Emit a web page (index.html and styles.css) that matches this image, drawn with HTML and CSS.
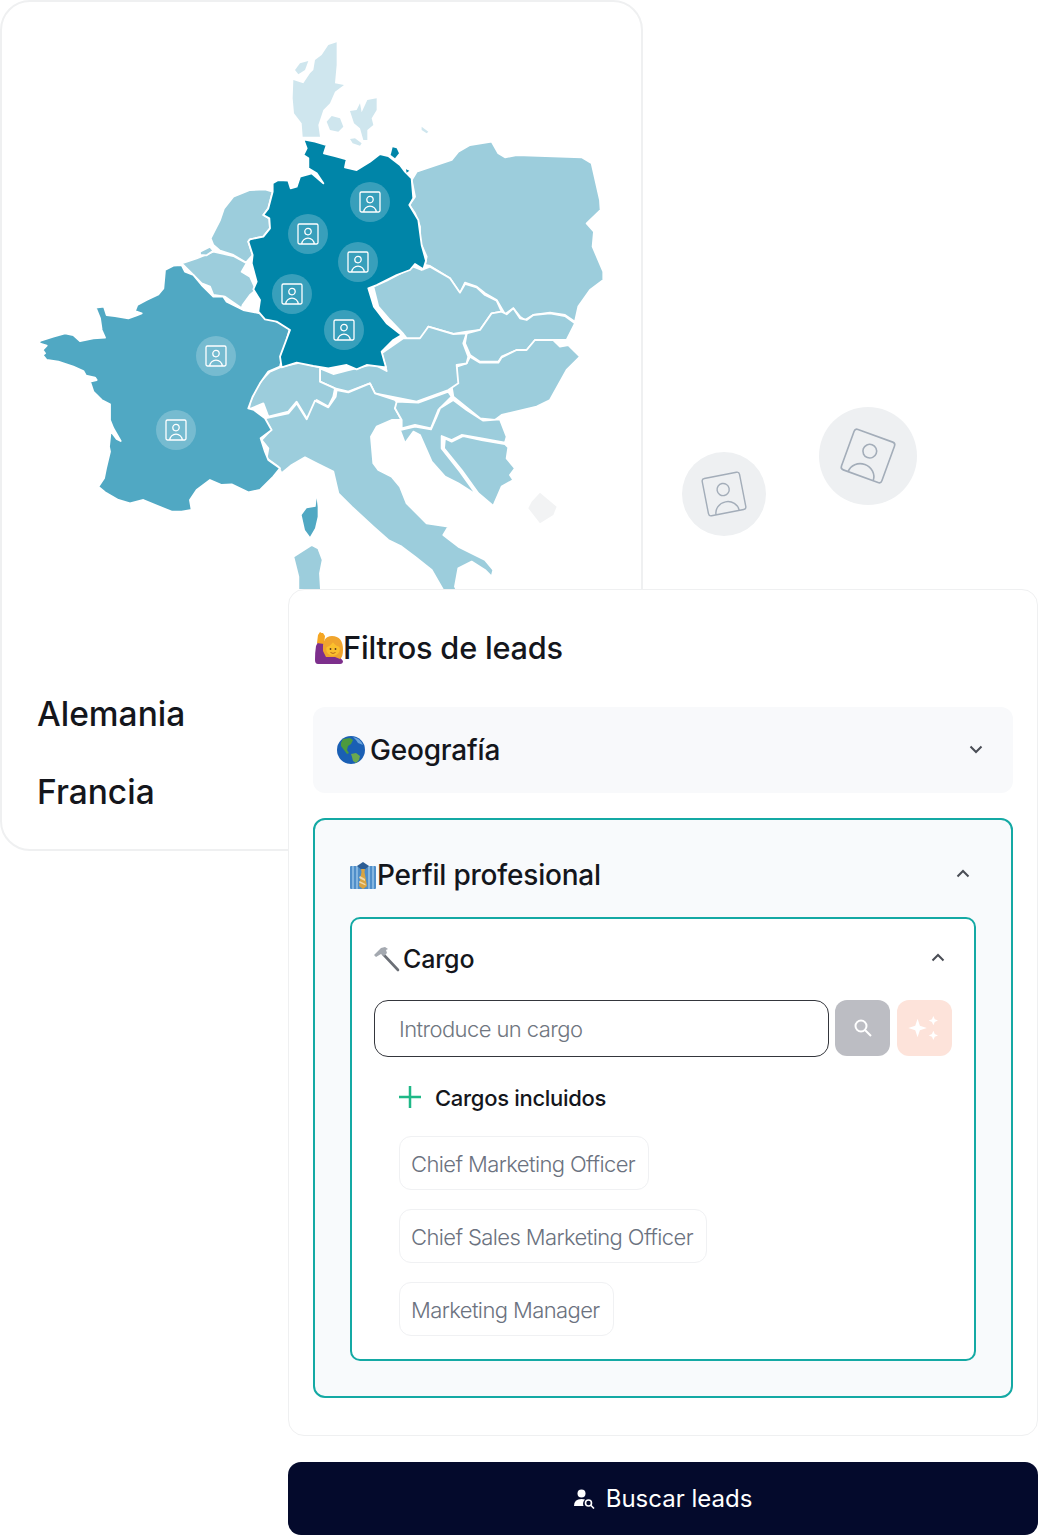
FILE: index.html
```html
<!DOCTYPE html>
<html lang="es">
<head>
<meta charset="utf-8">
<title>Filtros de leads</title>
<link rel="stylesheet" href="styles.css">
</head>
<body>
<svg class="defs" width="0" height="0" aria-hidden="true">
  <defs>
    <g id="person">
      <rect x="-10" y="-10" width="20" height="20" rx="1.4"/>
      <circle cx="0" cy="-2.4" r="3.2"/>
      <path d="M-6.200 10a6.200 5.800 0 0 1 12.400 0"/>
    </g>
  </defs>
</svg>
<main class="stage">
  <section class="map-card">
    <svg class="map" viewBox="0 0 640 600" role="img" aria-label="Mapa de Europa">
      <g class="land-pale" transform="translate(280 35) scale(.3333)">
        <path d="M170 22L145 30 125 60 105 75 100 105 90 115 70 145 40 135 38 190 42 235 65 265 68 305 120 305 115 270 130 225 150 205 165 170 192 150 165 145 170 90Z"/>
        <path d="M45 105L60 85 85 78 75 105 55 118Z"/>
        <path d="M140 260L155 243 180 250 190 275 175 290 150 285Z"/>
        <path d="M210 228L230 225 240 205 245 232 262 195 290 190 290 225 275 250 280 270 262 285 262 315 250 315 240 280 222 265Z"/>
        <path d="M210 312L225 310 245 325 240 332 218 325Z"/>
        <path d="M425 275L445 290 440 295 425 285Z"/>
      </g>
      <g class="land-light" transform="translate(370 130) scale(.3333)">
        <path d="M140 125L245 90 265 65 300 45 365 35 385 70 405 82 440 75 635 82 665 100 690 210 692 240 650 280 672 305 668 350 700 425 700 450 660 480 625 530 615 575 585 555 540 548 490 555 465 570 450 560 430 535 405 553 380 510 345 490 320 470 285 458 270 490 240 445 180 408 165 405 170 380 150 335 150 290 135 250 118 225 135 200 125 150Z"/>
        <path d="M10 470L50 452 130 410 155 420 180 410 240 445 270 488 285 462 320 472 345 495 380 512 395 545 365 550 330 600 290 605 250 612 175 590 155 625 110 625 100 612 60 570 25 530Z"/>
        <path d="M290 610L330 600 365 550 395 545 410 553 430 535 450 565 470 570 490 555 540 550 585 558 615 580 590 630 550 630 495 630 470 660 440 660 395 680 385 695 330 695 300 675 285 640Z"/>
        <path d="M300 680L330 698 385 698 395 682 440 660 470 660 495 630 550 630 570 650 595 645 630 680 590 720 540 810 500 830 395 855 375 870 330 865 250 800 245 770 255 745 260 710 290 700Z"/>
      </g>
      <g class="land-light" transform="translate(245 360) scale(.3333)">
        <path d="M225 25L265 42 305 32 385 12 425 33 410 -20 475 -65 525 -65 550 -100 625 -78 665 -80 655 -50 670 -10 665 10 635 15 640 70 610 90 515 125 390 100 375 70 310 95 270 85 225 65Z"/>
        <path d="M75 35L110 20 165 8 225 22 225 65 270 85 265 110 250 140 215 120 205 150 185 175 155 125 130 155 70 170 55 130 12 148 15 125 35 85 50 60Z"/>
        <path d="M60 175L130 160 155 130 185 178 210 122 250 142 272 110 275 90 310 97 375 70 390 100 450 120 460 130 450 145 470 180 440 180 395 200 378 230 385 310 400 330 440 350 465 380 485 430 545 490 610 500 595 525 640 560 720 600 745 630 740 650 720 630 680 605 640 625 630 680 640 700 600 700 560 630 510 590 470 560 430 540 385 500 320 440 280 400 265 335 215 310 180 292 140 315 110 340 100 320 65 295 70 265 50 240 78 210Z"/>
        <path d="M455 125L520 128 610 95 620 110 580 150 570 175 558 205 510 195 470 205 470 180 450 145Z"/>
        <path d="M625 120L665 150 715 182 765 178 785 230 780 248 710 235 650 225 620 240 590 228 590 265 645 335 695 405 640 370 600 350 560 305 525 225 505 215 480 250 465 210 510 200 558 208 575 170 585 145Z"/>
        <path d="M600 235L620 245 655 228 710 240 780 252 790 262 785 295 810 325 795 345 805 360 770 380 745 438 700 400 650 330 597 265Z"/>
        <path d="M145 590L200 555 220 565 233 600 225 640 228 690 160 690 160 650Z"/>
      </g>
      <g class="land-light" transform="translate(200 130) scale(.3333)">
        <path d="M32 325L60 270 72 235 100 200 150 180 195 178 218 185 205 235 190 255 208 265 210 295 190 320 150 328 145 335 158 375 138 398 100 375 60 362 40 345Z"/>
        <path d="M-55 400L-10 385 40 365 100 378 140 400 125 425 150 440 168 480 150 495 128 525 125 535 75 500 40 495 30 470 5 460 -20 435Z"/>
        <path d="M0 365L30 350 40 362 20 376 0 375Z"/>
      </g>
      <g class="land-mid" transform="translate(30 255) scale(.3333)">
        <path d="M455 30L430 32 405 45 400 100 385 118 350 135 322 150 315 168 335 175 318 182 295 190 255 183 230 180 222 155 197 158 210 190 215 225 225 248 190 250 150 258 130 240 105 235 70 245 30 258 28 265 50 272 38 285 45 295 38 300 50 315 85 320 130 335 160 348 168 362 195 368 200 375 180 380 190 410 215 435 240 448 240 495 250 520 272 558 260 552 242 528 237 575 240 590 228 640 222 670 205 695 225 712 265 735 300 745 340 735 380 752 425 770 455 770 485 765 480 735 500 705 540 675 575 690 605 688 655 712 690 705 730 665 750 640 715 615 705 590 692 550 725 525 705 490 672 465 655 460 668 425 690 385 715 350 750 335 770 255 782 212 740 200 690 175 640 165 590 140 580 125 550 125 515 90 490 60 465 50Z"/>
      </g>
      <path class="land-corsica" transform="translate(245 360) scale(.3333)" d="M215 415L212 440 185 445 170 465 180 510 195 530 210 505 218 470 218 440Z"/>
      <g class="land-dark" transform="translate(200 130) scale(.3333)">
        <path d="M310 28L345 35 380 45 372 70 405 78 440 88 435 112 470 120 510 95 540 72 565 78 600 105 615 125 635 145 640 205 628 225 655 270 665 345 678 392 670 418 645 402 630 420 590 435 530 465 505 475 522 530 560 580 605 615 580 630 545 665 558 712 500 705 470 718 440 705 385 715 340 708 290 698 245 712 240 680 270 600 230 575 195 568 175 545 180 510 160 478 170 455 155 400 158 375 145 335 150 328 190 320 210 295 208 265 190 255 205 235 218 185 218 160 235 150 265 152 272 175 290 170 300 140 335 130 370 160 350 130 325 115 325 85 310 75 320 55Z"/>
        <path class="bare" d="M578 52L590 55 597 70 585 85 572 75Z"/>
        <path class="bare" d="M618 118L628 122 620 128Z"/>
      </g>
      <path class="land-ghost" transform="translate(245 360) scale(.3333)" d="M885 398L935 440 925 465 885 490 850 445 860 425Z"/>
      <g class="pins">
        <g transform="translate(370 202)"><circle r="20"/><use href="#person"/></g>
        <g transform="translate(308 234)"><circle r="20"/><use href="#person"/></g>
        <g transform="translate(358 262)"><circle r="20"/><use href="#person"/></g>
        <g transform="translate(292 294)"><circle r="20"/><use href="#person"/></g>
        <g transform="translate(344 330)"><circle r="20"/><use href="#person"/></g>
        <g transform="translate(216 356)"><circle r="20"/><use href="#person"/></g>
        <g transform="translate(176 430)"><circle r="20"/><use href="#person"/></g>
      </g>
    </svg>
    <ul class="countries">
      <li>Alemania</li>
      <li>Francia</li>
    </ul>
  </section>

  <svg class="float float-small" viewBox="-42 -42 84 84" aria-hidden="true">
    <circle class="float-bg" r="42"/>
    <use class="float-icon" href="#person" transform="rotate(-11) scale(1.9)"/>
  </svg>
  <svg class="float float-large" viewBox="-49 -49 98 98" aria-hidden="true">
    <circle class="float-bg" r="49"/>
    <use class="float-icon" href="#person" transform="rotate(20) scale(2.15)"/>
  </svg>

  <div class="side">
    <section class="panel">
      <h1 class="panel-title">
        <svg class="emoji emoji-raise" viewBox="0 0 28 32" aria-hidden="true">
          <path fill="#7d2f8c" d="M3 32q-3 0-3-4 0-8 1-14l2-4 6 1-1 6 4 3 10 2 6 7q0 3-3 3Z"/>
          <path fill="#f5a623" d="M2 11l1-8 2-3 1.500 1 1.500 0 2 3-1 8Z"/>
          <path fill="#f0a52e" d="M8 19q-1-15 9-15 11 0 11 14 0 7-3 9l-5-2H11Z"/>
          <circle cx="18" cy="17" r="6.800" fill="#fbc02d"/>
          <path fill="#f0a52e" d="M11 15q4 0 7-5 2 4 7 5l-1-7-7-1-5 3Z"/>
          <circle cx="15.500" cy="17" r=".9" fill="#5c3b1e"/>
          <circle cx="20.500" cy="17" r=".9" fill="#5c3b1e"/>
          <path fill="none" stroke="#b5651d" stroke-width="1" d="M15.500 20.500q2.500 1.800 5 0"/>
        </svg>
        <span>Filtros de leads</span>
      </h1>

      <div class="section section-closed">
        <h2 class="section-title">
          <svg class="emoji emoji-globe" viewBox="0 0 28 28" aria-hidden="true">
            <circle cx="14" cy="14" r="14" fill="#1a5fb4"/>
            <path fill="#4c9a3f" d="M6 3l7-1 3 2-2 4-3 2-1 4 2 3-2 1-3-4-3-4 0-3Z"/>
            <path fill="#6aa84f" d="M14 18l5-1 4 3-1 4-3 3-3-2-1-4Z"/>
            <path fill="#9ed0f5" opacity=".6" d="M16 1q7 1 10 8l-5-2-2-3Z"/>
          </svg>
          <span>Geografía</span>
        </h2>
        <svg class="chev" viewBox="0 0 14 9" aria-hidden="true"><path d="M1.500 1.500L7 7l5.500-5.500"/></svg>
      </div>

      <div class="section-open">
        <div class="open-head">
          <h2 class="section-title">
            <svg class="emoji emoji-shirt" viewBox="0 0 26 27" aria-hidden="true">
              <rect y="4" width="26" height="23" rx="1" fill="#4f8ec9"/>
              <path stroke="#a9d0ef" stroke-width="1.200" d="M3 4v23M7 4v23M19 4v23M23 4v23"/>
              <path fill="#2c5d94" d="M7 4l6-4 6 4-6 5Z"/>
              <path fill="#d9a441" d="M11 7h4l-.5 3 2.500 14-4 3-4-3 2.500-14Z"/>
              <path fill="#f0d9a8" d="M10 14l5 3v2l-6-3ZM9.500 19l6 3v1.500l-6.500-3Z"/>
            </svg>
            <span>Perfil profesional</span>
          </h2>
          <svg class="chev" viewBox="0 0 14 9" aria-hidden="true"><path d="M1.500 7.500L7 2l5.500 5.500"/></svg>
        </div>

        <div class="cargo">
          <div class="cargo-head">
            <h3 class="cargo-title">
              <svg class="emoji emoji-hammer" viewBox="0 0 26 25" aria-hidden="true">
                <path stroke="#6b6f76" stroke-width="2.600" stroke-linecap="round" d="M9 7l15 16"/>
                <path fill="#a4a9b0" d="M0 8l7-7 4-1 3 2-2 1 1 3-3 3-3-2-5 3Z"/>
              </svg>
              <span>Cargo</span>
            </h3>
            <svg class="chev" viewBox="0 0 14 9" aria-hidden="true"><path d="M1.500 7.500L7 2l5.500 5.500"/></svg>
          </div>

          <div class="search-row">
            <input class="search-input" type="text" placeholder="Introduce un cargo">
            <button class="tool tool-search" type="button" aria-label="Buscar">
              <svg viewBox="0 0 20 20" aria-hidden="true"><circle cx="8" cy="8" r="5.500"/><path d="M12 12l6 6"/></svg>
            </button>
            <button class="tool tool-spark" type="button" aria-label="Sugerir">
              <svg viewBox="0 0 40 28" aria-hidden="true">
                <path d="M12 4l2.500 7.500L22 14l-7.500 2.500L12 24l-2.500-7.500L2 14l7.500-2.500Z"/>
                <path d="M29 1l1.500 3.500L34 6l-3.500 1.500L29 11l-1.500-3.500L24 6l3.500-1.500Z"/>
                <path d="M29 17l1.500 3.500L34 22l-3.500 1.500L29 27l-1.500-3.500L24 22l3.500-1.500Z"/>
              </svg>
            </button>
          </div>

          <div class="included">
            <div class="included-head">
              <svg class="plus" viewBox="0 0 22 22" aria-hidden="true"><path d="M11 0v22M0 11h22"/></svg>
              <span>Cargos incluidos</span>
            </div>
            <ul class="chips">
              <li class="chip">Chief Marketing Officer</li>
              <li class="chip">Chief Sales Marketing Officer</li>
              <li class="chip">Marketing Manager</li>
            </ul>
          </div>
        </div>
      </div>
    </section>

    <button class="cta" type="button">
      <svg class="cta-icon" viewBox="0 0 21 20" aria-hidden="true">
        <circle cx="7.500" cy="4.500" r="4"/>
        <path d="M0 17q0-7 7.500-7 2 0 3.500.5-3 3-1.500 6.500Z"/>
        <circle class="cta-lens" cx="14.500" cy="14" r="3"/>
        <path class="cta-lens" d="M16.800 16.300L20 19.500"/>
      </svg>
      <span>Buscar leads</span>
    </button>
  </div>
</main>
</body>
</html>
```

FILE: styles.css
```css
* { box-sizing: border-box; }

html, body {
  margin: 0;
  padding: 0;
  background: #fff;
}

body {
  font-family: "Inter", "Noto Sans", sans-serif;
  color: #14161c;
}

.defs { display: block; height: 0; }

.stage {
  position: relative;
  width: 1038px;
  height: 1536px;
  overflow: hidden;
}

/* Map card */
.map-card {
  width: 643px;
  height: 851px;
  border: 2px solid #eff0f1;
  border-radius: 30px;
  background: #fff;
}

.map {
  display: block;
  width: 640px;
  height: 600px;
  margin: -2px 0 0 -2px;
}

.land-pale path { fill: #cfe6ee; }
.land-light path { fill: #9ccddc; stroke: #fff; stroke-width: 5.500; stroke-linejoin: round; }
.land-mid path { fill: #50a8c3; stroke: #fff; stroke-width: 5.500; stroke-linejoin: round; }
.land-dark path { fill: #0085a8; stroke: #fff; stroke-width: 5.500; stroke-linejoin: round; }
.land-dark .bare { stroke: none; }
.land-corsica { fill: #50a8c3; }
.land-ghost { fill: #f2f3f4; }

.pins circle { fill: rgba(255, 255, 255, .22); }
.pins use { fill: none; stroke: #fff; stroke-width: 1.3; }

.countries {
  list-style: none;
  margin: 92px 0 0 35px;
  padding: 0;
  display: flex;
  flex-direction: column;
  gap: 34px;
  font-size: 33.500px;
  line-height: 44px;
  font-weight: 500;
  color: #14161c;
}

/* Floating avatars */
.float { position: absolute; display: block; }
.float-small { left: 682px; top: 452px; width: 84px; height: 84px; }
.float-large { left: 819px; top: 407px; width: 98px; height: 98px; }
.float-bg { fill: #eef0f2; }
.float-icon { fill: none; stroke: #a3adb9; stroke-width: .75; }

/* Filters column */
.side {
  position: absolute;
  left: 288px;
  top: 589px;
  width: 750px;
  display: flex;
  flex-direction: column;
  gap: 26px;
}

.panel {
  height: 847px;
  padding: 38px 24px 0;
  background: #fff;
  border: 1px solid #eff0f1;
  border-radius: 16px;
}

.panel-title, .section-title, .cargo-title {
  margin: 0;
  display: flex;
  align-items: center;
  font-weight: 500;
  letter-spacing: -.2px;
}

.panel-title {
  font-size: 30.700px;
  line-height: 40px;
  margin: 0 0 39px 2px;
}

.section-title { font-size: 28px; line-height: 40px; }
.cargo-title { font-size: 25px; line-height: 34px; }

.emoji { display: block; flex: none; }
.emoji-raise { width: 28px; height: 32px; margin-right: 0; }
.emoji-globe { width: 28px; height: 28px; margin-right: 5px; }
.emoji-shirt { width: 26px; height: 27px; margin-right: 1px; }
.emoji-hammer { width: 26px; height: 25px; margin-right: 3px; }

.chev {
  display: block;
  flex: none;
  width: 14px;
  height: 9px;
  margin-bottom: 2px;
  fill: none;
  stroke: #4a4d55;
  stroke-width: 2;
}

.open-head .chev, .cargo-head .chev { margin-bottom: 4px; }

.section-closed {
  height: 86px;
  margin-bottom: 25px;
  padding: 0 30px 0 24px;
  display: flex;
  align-items: center;
  justify-content: space-between;
  background: #f8f9fb;
  border-radius: 12px;
}

.section-open {
  height: 580px;
  padding: 35px 35px 0;
  background: #f8fafc;
  border: 2px solid #14a9a4;
  border-radius: 12px;
}

.open-head {
  height: 40px;
  margin-bottom: 22px;
  padding-right: 6px;
  display: flex;
  align-items: center;
  justify-content: space-between;
}

.cargo {
  height: 444px;
  padding: 23px 20px 0 22px;
  background: #fff;
  border: 2px solid #14a9a4;
  border-radius: 10px;
}

.cargo-head {
  height: 34px;
  margin-bottom: 24px;
  padding-right: 9px;
  display: flex;
  align-items: center;
  justify-content: space-between;
}

.search-row {
  display: flex;
  gap: 6px;
}

.search-input {
  width: 455px;
  height: 57px;
  padding: 1px 24px 0;
  border: 1px solid #34363c;
  border-radius: 14px;
  background: #fff;
  font: 300 22px "Inter", sans-serif;
  letter-spacing: -.58px;
  color: #6f7680;
  outline: none;
}

.search-input::placeholder { color: #6f7680; opacity: 1; }

.tool {
  width: 55px;
  height: 56px;
  padding: 0;
  border: 0;
  border-radius: 12px;
  display: flex;
  align-items: center;
  justify-content: center;
}

.tool-search { background: #bcbdc3; }
.tool-search svg { width: 20px; height: 20px; fill: none; stroke: #fff; stroke-width: 2; }
.tool-spark { background: #fde3da; margin-left: 1px; }
.tool-spark svg { width: 38px; height: 26px; fill: #fff; }

.included {
  margin-top: 25px;
  padding-left: 25px;
}

.included-head {
  height: 32px;
  margin-bottom: 22px;
  display: flex;
  align-items: center;
  gap: 14px;
  font-size: 22px;
  font-weight: 500;
  letter-spacing: -.3px;
}

.plus {
  display: block;
  flex: none;
  width: 22px;
  height: 22px;
  margin-bottom: 2px;
  fill: none;
  stroke: #1fb887;
  stroke-width: 2.500;
}

.chips {
  list-style: none;
  margin: 0;
  padding: 0;
  display: flex;
  flex-direction: column;
  align-items: flex-start;
  gap: 19px;
}

.chip {
  height: 54px;
  padding: 2px 13px 0 11px;
  display: flex;
  align-items: center;
  border: 1px solid #f0f1f3;
  border-radius: 12px;
  font-size: 22px;
  font-weight: 300;
  letter-spacing: -.6px;
  color: #6b7280;
}

/* Main action */
.cta {
  height: 73px;
  padding: 0;
  border: 0;
  border-radius: 13px;
  background: #040a2c;
  color: #fff;
  display: flex;
  align-items: center;
  justify-content: center;
  gap: 11px;
  font: 400 24px "Inter", sans-serif;
}

.cta-icon { display: block; width: 21px; height: 20px; fill: #fff; }
.cta-lens { fill: none; stroke: #fff; stroke-width: 1.600; }
```
